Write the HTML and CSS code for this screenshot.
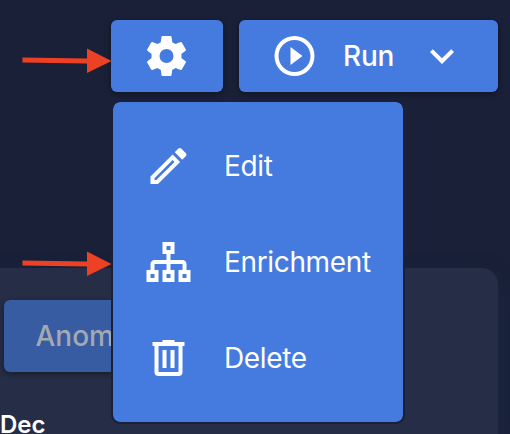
FILE: index.html
```html
<!DOCTYPE html>
<html lang="en">
<head>
<meta charset="utf-8">
<title>Actions</title>
<link rel="stylesheet" href="styles.css">
</head>
<body>
<header class="toolbar">
  <button class="btn settings"><svg class="icon" viewBox="-0.25 0 24 24"><path d="M12,15.5A3.5,3.5 0 0,1 8.5,12A3.5,3.5 0 0,1 12,8.5A3.5,3.5 0 0,1 15.5,12A3.5,3.5 0 0,1 12,15.5M19.43,12.97C19.47,12.65 19.5,12.33 19.5,12C19.5,11.67 19.47,11.34 19.43,11L21.54,9.37C21.73,9.22 21.78,8.95 21.66,8.73L19.66,5.27C19.54,5.05 19.27,4.96 19.05,5.05L16.56,6.05C16.04,5.66 15.5,5.32 14.87,5.07L14.5,2.42C14.46,2.18 14.25,2 14,2H10C9.75,2 9.54,2.18 9.5,2.42L9.13,5.07C8.5,5.32 7.96,5.66 7.44,6.05L4.95,5.05C4.73,4.96 4.46,5.05 4.34,5.27L2.34,8.73C2.21,8.95 2.27,9.22 2.46,9.37L4.57,11C4.53,11.34 4.5,11.67 4.5,12C4.5,12.33 4.53,12.65 4.57,12.97L2.46,14.63C2.27,14.78 2.21,15.05 2.34,15.27L4.34,18.73C4.46,18.95 4.73,19.03 4.95,18.95L7.44,17.94C7.96,18.34 8.5,18.68 9.13,18.93L9.5,21.58C9.54,21.82 9.75,22 10,22H14C14.25,22 14.46,21.82 14.5,21.58L14.87,18.93C15.5,18.67 16.04,18.34 16.56,17.94L19.05,18.95C19.27,19.03 19.54,18.95 19.66,18.73L21.66,15.27C21.78,15.05 21.73,14.78 21.54,14.63L19.43,12.97Z"/></svg></button>
  <button class="btn run">
    <svg class="icon" viewBox="-0.25 0 24 24"><path d="M12,20C7.59,20 4,16.41 4,12C4,7.59 7.59,4 12,4C16.41,4 20,7.59 20,12C20,16.41 16.41,20 12,20M12,2A10,10 0 0,0 2,12A10,10 0 0,0 12,22A10,10 0 0,0 22,12A10,10 0 0,0 12,2M10,16.5L16,12L10,7.5V16.5Z"/></svg>
    <span class="run-label">Run</span>
    <svg class="icon" viewBox="0 0 24 24"><path d="M7.41,8.58L12,13.17L16.59,8.58L18,10L12,16L6,10L7.41,8.58Z"/></svg>
  </button>
</header>
<main class="card">
  <button class="btn anomaly" disabled>Anomaly</button>
  <div class="date">Dec</div>
</main>
<nav class="menu">
  <a class="item"><svg class="icon" viewBox="-0.25 0 24 24"><path d="M14.06,9L15,9.94L5.92,19H5V18.08L14.06,9M17.66,3C17.41,3 17.15,3.1 16.96,3.29L15.13,5.12L18.88,8.87L20.71,7.04C21.1,6.65 21.1,6 20.71,5.63L18.37,3.29C18.17,3.09 17.92,3 17.66,3M14.06,6.19L3,17.25V21H6.75L17.81,9.94L14.06,6.19Z"/></svg><span class="label">Edit</span></a>
  <a class="item"><svg class="icon" viewBox="-0.25 0 24 24"><path d="M9 2V8H11V11H5C3.89 11 3 11.89 3 13V16H1V22H7V16H5V13H11V16H9V22H15V16H13V13H19V16H17V22H23V16H21V13C21 11.89 20.11 11 19 11H13V8H15V2H9M11 4H13V6H11V4M3 18H5V20H3V18M11 18H13V20H11V18M19 18H21V20H19V18Z"/></svg><span class="label">Enrichment</span></a>
  <a class="item"><svg class="icon" viewBox="-0.25 0 24 24"><path d="M9,3V4H4V6H5V19A2,2 0 0,0 7,21H17A2,2 0 0,0 19,19V6H20V4H15V3H9M7,6H17V19H7V6M9,8V17H11V8H9M13,8V17H15V8H13Z"/></svg><span class="label">Delete</span></a>
</nav>
<svg class="arrow arrow-settings" viewBox="0 0 90 26"><path d="M0.500 9.500L65 10.500V0.500L89.500 13L65 25V15.500L0.500 14.500Z"/></svg>
<svg class="arrow arrow-enrichment" viewBox="0 0 90 26"><path d="M0.500 9.500L65 10.500V0.500L89.500 13L65 25V15.500L0.500 14.500Z"/></svg>
</body>
</html>
```
FILE: styles.css
```css
* {
  box-sizing: border-box;
}

html {
  background: #192038;
}

body {
  position: relative;
  height: 434px;
  margin: 0;
  overflow: hidden;
  background: #192038;
  color: #fff;
  font-family: Inter, "Liberation Sans", sans-serif;
  font-size: 28px;
}

.toolbar {
  display: flex;
  justify-content: flex-end;
  gap: 16px;
  padding: 20px 12px 0 0;
}

.btn {
  display: flex;
  align-items: center;
  height: 72px;
  padding: 0;
  border: 0;
  border-radius: 6px;
  background: #457bdf;
  box-shadow: 0 2px 6px rgba(0, 0, 0, 0.4);
  color: inherit;
  font: 500 28px Inter, "Liberation Sans", sans-serif;
}

.icon {
  display: block;
  flex: none;
  width: 48px;
  height: 48px;
  fill: #fff;
}

.settings {
  width: 112px;
  padding-left: 31px;
}

.run {
  width: 259px;
  padding-left: 31px;
}

.run-label {
  width: 75px;
  margin-left: 25px;
  text-align: left;
  letter-spacing: -0.200px;
}

.card {
  height: 166px;
  margin: 176px 12px 0 -20px;
  padding: 32px 0 0 24px;
  border-radius: 0 16px 0 0;
  background: #262d46;
  box-shadow: 0 12px 24px rgba(30, 52, 80, 0.5);
}

.anomaly {
  width: 180px;
  padding-left: 31.500px;
  background: #385ca1;
  color: #a3a8b3;
}

.date {
  margin: 38px 0 0 -4px;
  padding-top: 3px;
  font-size: 24px;
  font-weight: 600;
  line-height: 24px;
}

.menu {
  position: absolute;
  top: 100px;
  left: 111px;
  width: 294px;
  height: 324px;
  padding: 16px 0;
  border: 2px solid #192038;
  border-radius: 9px;
  background: #457bdf;
  background-clip: padding-box;
}

.item {
  display: flex;
  align-items: center;
  gap: 32px;
  height: 96px;
  padding-left: 31px;
}

.label {
  font-weight: 400;
  letter-spacing: -0.350px;
}

.arrow {
  position: absolute;
  left: 22px;
  width: 90px;
  height: 26px;
  fill: #ed4125;
}

.arrow-settings {
  top: 48px;
}

.arrow-enrichment {
  top: 251px;
}
```
